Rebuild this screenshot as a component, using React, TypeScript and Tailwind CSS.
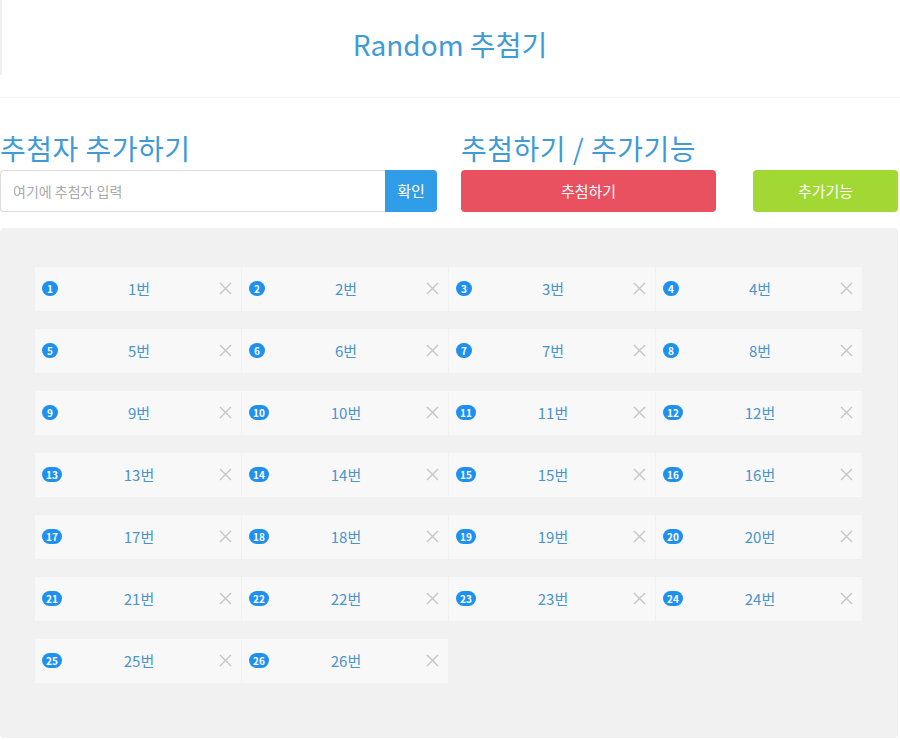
import React, { useState } from 'react';

const font = { fontFamily: '"Noto Sans CJK KR", "Noto Sans", sans-serif' };

const App: React.FC = () => {
    const [names, setNames] = useState<string[]>(Array.from({ length: 26 }, (_, i) => `${i + 1}번`));
    const [input, setInput] = useState('');

    const addName = () => {
        if (!input.trim()) return;
        setNames([...names, input.trim()]);
        setInput('');
    };

    return (
        <div className="w-[900px] min-h-[740px] bg-white" style={font}>
            {/* Header */}
            <div className="relative h-[98px] border-b border-[#f3f3f3] flex items-center justify-center">
                <div className="absolute left-0 top-0 h-[75px] w-[2px] bg-[#f0f0f0]" />
                <h1 className="text-[28px] text-[#3f9bd6] font-normal leading-none -mt-[10px]">Random 추첨기</h1>
            </div>

            {/* Controls */}
            <div className="flex w-[898px] pt-[28px]">
                <div className="w-[437px]">
                    <h2 className="text-[28px] leading-[44px] text-[#3f9bd6] tracking-[0.5px]">추첨자 추가하기</h2>
                    <div className="flex h-[42px]">
                        <input
                            value={input}
                            onChange={(e) => setInput(e.target.value)}
                            placeholder="여기에 추첨자 입력"
                            className="flex-1 border border-[#dddddd] border-r-0 rounded-l-[4px] pl-[12px] text-[14px] text-[#555] placeholder:text-[#a9a9a9] outline-none"
                        />
                        <button onClick={addName} className="w-[52px] bg-[#2f9de8] text-white text-[15px] rounded-r-[4px]">확인</button>
                    </div>
                </div>
                <div className="ml-[24px] flex-1">
                    <h2 className="text-[28px] leading-[44px] text-[#3f9bd6] tracking-[0.5px]">추첨하기 / 추가기능</h2>
                    <div className="flex h-[42px] justify-between">
                        <button className="w-[255px] bg-[#ea5160] text-white text-[15px] rounded-[4px]">추첨하기</button>
                        <button className="w-[145px] bg-[#a1d833] text-white text-[15px] rounded-[4px]">추가기능</button>
                    </div>
                </div>
            </div>

            {/* List panel */}
            <div className="mt-[16px] w-[898px] min-h-[510px] bg-[#f1f1f1] rounded-[4px] pl-[35px] pt-[39px] pb-[55px]">
                <div className="w-[827px] grid grid-cols-4 gap-x-[1px] gap-y-[18px]">
                    {names.map((name, idx) => (
                        <div key={idx} className="relative h-[44px] bg-[#f8f8f8] flex items-center justify-center">
                            <span className="absolute left-[7px] top-[14px] h-[15px] min-w-[16px] px-[4px] rounded-full bg-[#1e91f0] text-white text-[10px] font-bold leading-[15px] text-center">
                                {idx + 1}
                            </span>
                            <span className="text-[15px] text-[#4a94cc] pl-[2px]">{name}</span>
                            <button
                                onClick={() => setNames(names.filter((_, i) => i !== idx))}
                                className="absolute right-[9px] top-[15px] text-[#c6c6c6]"
                            >
                                <svg width="13" height="13" viewBox="0 0 13 13" fill="none" stroke="currentColor" strokeWidth="1.4">
                                    <path d="M1 1L12 12M12 1L1 12" />
                                </svg>
                            </button>
                        </div>
                    ))}
                </div>
            </div>
        </div>
    );
};

export default App;
